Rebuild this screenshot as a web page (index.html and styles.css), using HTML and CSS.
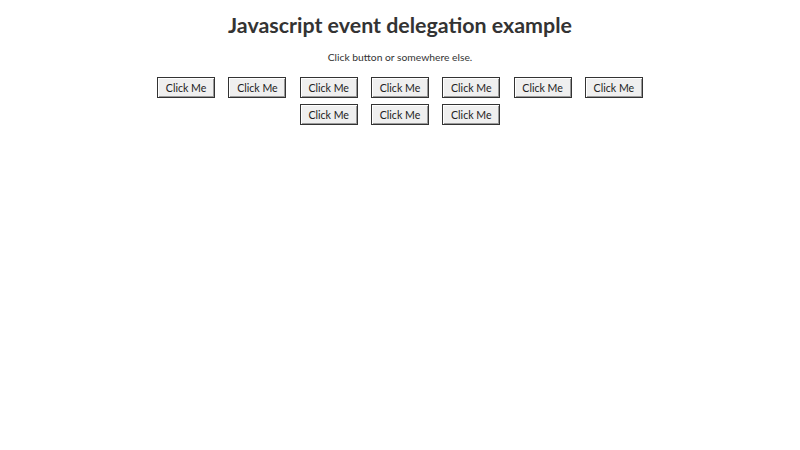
FILE: index.html
```html
<!DOCTYPE html>
<html lang="en">
<head>
  <meta charset="UTF-8">
  <title>Javascript event delegation example</title>
  <link rel="stylesheet" href="styles.css">
</head>
<body>

<h1 class="title">Javascript event delegation example</h1>
<p class="hint">Click button or somewhere else.</p>

<div class="buttons">
  <button class="btn">Click Me</button>
  <button class="btn">Click Me</button>
  <button class="btn">Click Me</button>
  <button class="btn">Click Me</button>
  <button class="btn">Click Me</button>
  <button class="btn">Click Me</button>
  <button class="btn">Click Me</button>
  <button class="btn">Click Me</button>
  <button class="btn">Click Me</button>
  <button class="btn">Click Me</button>
</div>

</body>
</html>
```

FILE: styles.css
```css
* {
  box-sizing: border-box;
}

body {
  margin: 0;
  padding-top: 10px;
  font-family: Lato, 'Open Sans', sans-serif;
  color: #333;
  background-color: #fff;
  text-align: center;
}

.title {
  margin: 0;
  font-size: 21.4px;
  font-weight: bold;
  line-height: 30px;
}

.hint {
  margin: 9px 0 12px;
  font-size: 10.3px;
  line-height: 16px;
}

.buttons {
  width: 500px;
  margin: 0 auto;
  display: flex;
  flex-wrap: wrap;
  justify-content: center;
  column-gap: 13.3px;
  row-gap: 6px;
}

/* old-style raised button */
.btn {
  width: 58px;
  height: 21px;
  padding: 0;
  font-family: inherit;
  font-size: 10.6px;
  color: #222;
  background-color: #efefef;
  border: 1px solid #333;
  border-radius: 0;
  box-shadow: inset 1px 1px 0 #fff, inset -1px -1px 0 #999;
}
```
